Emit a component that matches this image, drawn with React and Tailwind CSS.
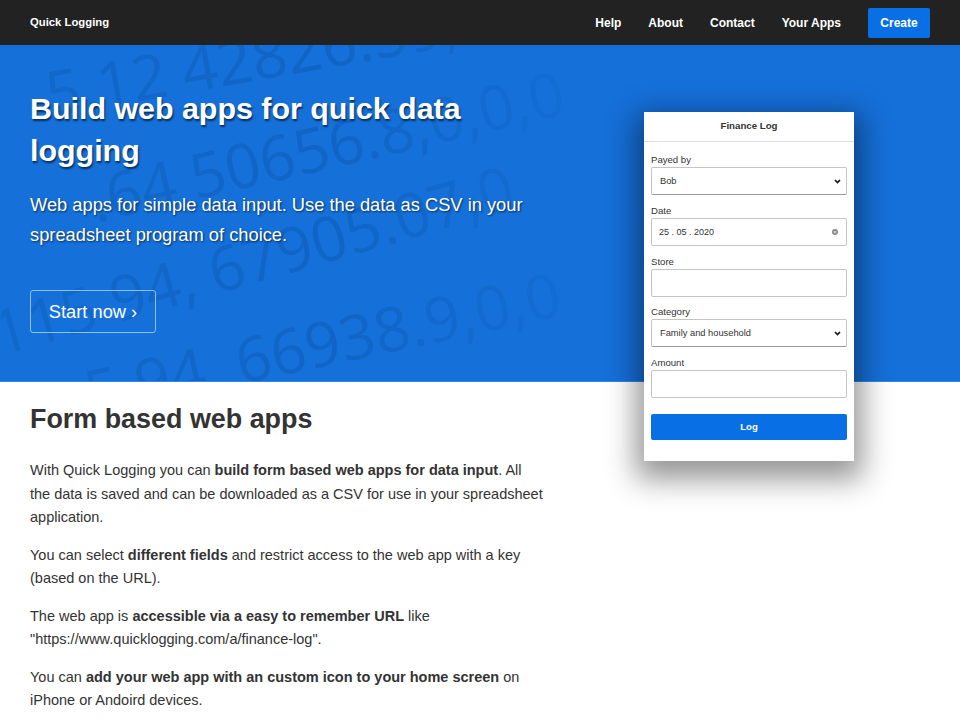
import React from 'react';

const font = { fontFamily: '"Liberation Sans", Arial, sans-serif' };

const digitLines = [
  { x: 185, y: 48, rot: -10, size: 62, before: '5,12', after: '42826.59,7' },
  { x: 195, y: 155, rot: -13, size: 62, before: '.64', after: '50656.8,0,0,0' },
  { x: 215, y: 250, rot: -16, size: 62, before: '115 94,', after: '67905.07,0' },
  { x: 240, y: 340, rot: -12, size: 62, before: '5 94.', after: '66938.9,0,0' },
];

function HeroDigits() {
  return (
    <svg className="absolute inset-0 w-full h-full blur-[0.7px]" viewBox="0 0 960 337">
      <defs>
        <linearGradient id="fade" x1="0" x2="1" y1="0" y2="0">
          <stop offset="0" stopColor="#fff" stopOpacity="0.7" />
          <stop offset="0.35" stopColor="#fff" stopOpacity="1" />
          <stop offset="0.55" stopColor="#fff" stopOpacity="0.35" />
          <stop offset="0.7" stopColor="#fff" stopOpacity="0.05" />
        </linearGradient>
        <mask id="digits">
          <rect width="960" height="337" fill="url(#fade)" />
        </mask>
      </defs>
      <g mask="url(#digits)" fill="#0a4f9e" fillOpacity="0.34" fontFamily="'Open Sans', sans-serif">
        {digitLines.map((l) => (
          <g key={l.after} transform={`translate(${l.x} ${l.y}) rotate(${l.rot})`} fontSize={l.size}>
            <text x="-16" textAnchor="end">{l.before}</text>
            <text>{l.after}</text>
          </g>
        ))}
      </g>
    </svg>
  );
}

function Field({ label, children }) {
  return (
    <div className="mb-[8.8px]">
      <div className="text-[9.6px] leading-[13px] text-[#333] mb-px">{label}</div>
      {children}
    </div>
  );
}

function SelectBox({ value }) {
  return (
    <div className="h-[28px] flex items-center justify-between pl-[8px] pr-[5px] bg-white border border-[#c4c4c4] border-b-[#999] rounded-[2px] text-[9.3px] text-[#333]">
      <span className="pt-px">{value}</span>
      <svg width="7" height="5" viewBox="0 0 7 5"><path d="M1 1l2.5 2.5L6 1" fill="none" stroke="#111" strokeWidth="1.6" /></svg>
    </div>
  );
}

function DateBox() {
  return (
    <div className="h-[28px] flex items-center justify-between pl-[7px] pr-[8px] bg-white border border-[#c4c4c4] rounded-[2px] text-[9px] text-[#333]">
      <span className="whitespace-pre pt-px">25 . 05 . 2020</span>
      <span className="w-[6px] h-[6px] rounded-full bg-[#888] flex items-center justify-center text-white text-[6px] leading-none">×</span>
    </div>
  );
}

function FormCard() {
  return (
    <div className="absolute left-[644px] top-[112px] w-[210px] h-[349px] bg-white shadow-[0_10px_28px_8px_rgba(0,0,0,0.42)]">
      <div className="h-[30px] border-b border-[#ddd] flex items-center justify-center text-[9.7px] font-bold text-[#333]">Finance Log</div>
      <div className="px-[7px] pt-[11px]">
        <Field label="Payed by"><SelectBox value="Bob" /></Field>
        <Field label="Date"><DateBox /></Field>
        <Field label="Store"><div className="h-[28px] border border-[#c4c4c4] rounded-[2px]" /></Field>
        <Field label="Category"><SelectBox value="Family and household" /></Field>
        <Field label="Amount"><div className="h-[28px] border border-[#c4c4c4] rounded-[2px]" /></Field>
        <div className="mt-[16px] h-[26px] bg-[#0870e4] rounded-[2px] flex items-center justify-center text-[9.6px] font-bold text-white">Log</div>
      </div>
    </div>
  );
}

export default function App() {
  const navItems = ['Help', 'About', 'Contact', 'Your Apps'];

  return (
    <div className="relative h-[720px] overflow-hidden bg-white" style={font}>
      {/* Nav */}
      <nav className="h-[45px] bg-[#222] flex items-center justify-between pl-[30px] pr-[30px]">
        <a className="text-[11.3px] font-bold text-white">Quick Logging</a>
        <div className="flex items-center">
          {navItems.map((item) => (
            <a key={item} className="text-[12px] font-bold text-white mr-[27px]">{item}</a>
          ))}
          <a className="h-[30px] w-[62px] bg-[#0870e4] rounded-[2px] flex items-center justify-center text-[12px] font-bold text-white">Create</a>
        </div>
      </nav>

      {/* Hero */}
      <section className="relative h-[337px] bg-[#1570da] overflow-hidden border-b border-[#2f86ee] pl-[30px] pt-[42px]">
        <HeroDigits />
        <div className="relative w-[520px]">
          <h1 className="text-[30.4px] leading-[42px] font-bold text-white [text-shadow:1px_2px_2px_rgba(0,0,0,0.6)]">Build web apps for quick data logging</h1>
          <p className="mt-[19px] text-[18.3px] leading-[30px] text-white [text-shadow:1px_1px_2px_rgba(0,0,0,0.6)]">Web apps for simple data input. Use the data as CSV in your spreadsheet program of choice.</p>
          <a className="mt-[40px] w-[126px] h-[43px] flex items-center justify-center border border-[#8fc0f5] rounded-[3px] text-[18.3px] text-white">Start now ›</a>
        </div>
      </section>

      {/* Content */}
      <section className="pl-[30px] pt-[20px] w-[544px] text-[14.5px] leading-[23.5px] text-[#333]">
        <h2 className="text-[26.9px] leading-[34px] font-bold mb-[23px]">Form based web apps</h2>
        <p className="mb-[14px]">With Quick Logging you can <b>build form based web apps for data input</b>. All the data is saved and can be downloaded as a CSV for use in your spreadsheet application.</p>
        <p className="mb-[14px]">You can select <b>different fields</b> and restrict access to the web app with a key (based on the URL).</p>
        <p className="mb-[14px]">The web app is <b>accessible via a easy to remember URL</b> like "https://www.quicklogging.com/a/finance-log".</p>
        <p>You can <b>add your web app with an custom icon to your home screen</b> on iPhone or Andoird devices.</p>
      </section>

      <FormCard />
    </div>
  );
}
